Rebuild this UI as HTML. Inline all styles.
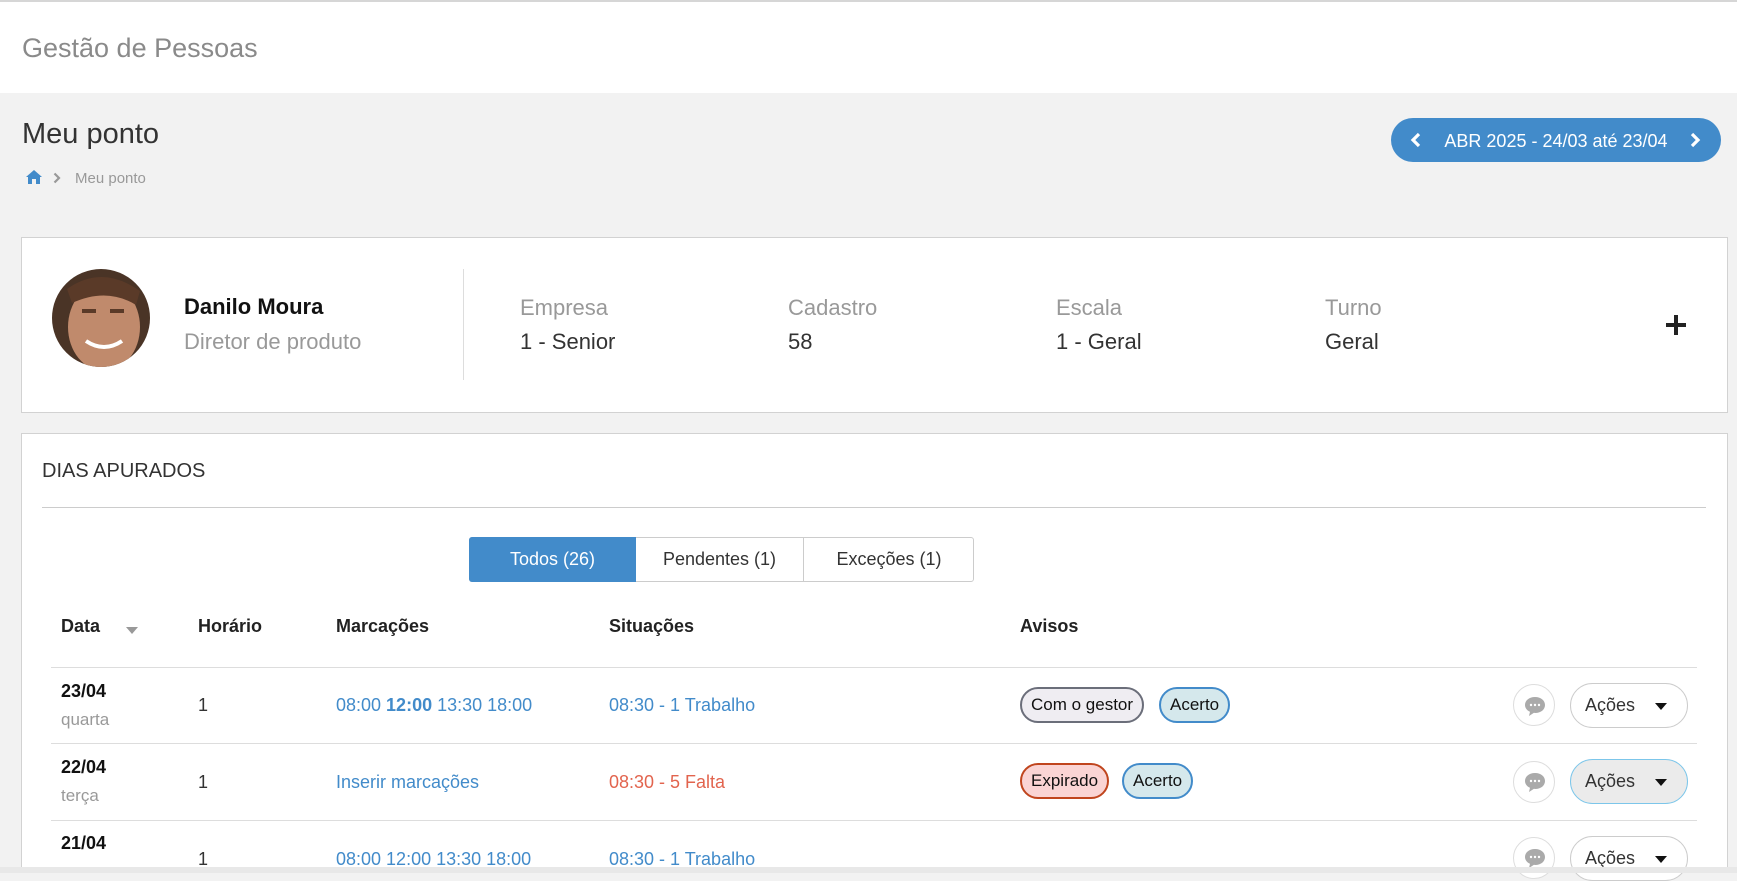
<!DOCTYPE html>
<html><head><meta charset="utf-8"><style>
*{box-sizing:border-box;margin:0;padding:0}
body{width:1737px;height:873px;overflow:hidden;background:#f2f2f2;font-family:"Liberation Sans","DejaVu Sans",sans-serif;position:relative;color:#333}
.a{position:absolute;white-space:nowrap}
.hdr{left:0;top:0;width:1737px;height:93px;background:#fff;border-top:2px solid #d6d6d6}
.card{background:#fff;border:1px solid #d2d2d2}
.lbl{font-size:22px;color:#999}
.val{font-size:22px;color:#333}
.th{font-size:18px;font-weight:bold;color:#222}
.blue{color:#428bca}
.badge{position:absolute;height:36px;border-radius:18px;border:2px solid;font-size:17px;line-height:32px;padding:0 9px;color:#111}
.cm{position:absolute;width:42px;height:42px;border-radius:50%;border:1px solid #ddd;background:#fff}
.ac{position:absolute;width:118px;height:45px;border-radius:23px;border:1px solid #ccc;background:#fff;font-size:18px;line-height:43px;padding-left:14px;color:#333}
.ac:after{content:"";position:absolute;right:20px;top:19px;border-left:6px solid transparent;border-right:6px solid transparent;border-top:7px solid #111}
.hl{position:absolute;left:51px;width:1646px;height:1px;background:#ddd}
</style></head><body>
<div class="a hdr"></div>
<div class="a" style="left:22px;top:33px;font-size:27px;color:#8a8a8a">Gestão de Pessoas</div>
<div class="a" style="left:22px;top:118px;font-size:29px;color:#333">Meu ponto</div>
<svg class="a" style="left:25px;top:169px" width="18" height="16" viewBox="0 0 18 16"><path d="M9 1 L1 8 L3 8 L3 15 L7 15 L7 10 L11 10 L11 15 L15 15 L15 8 L17 8 Z" fill="#428bca"/></svg>
<svg class="a" style="left:53px;top:172px" width="8" height="12" viewBox="0 0 8 12"><path d="M1.5 1.5 L6 6 L1.5 10.5" stroke="#999" stroke-width="2.2" fill="none"/></svg>
<div class="a" style="left:75px;top:170px;font-size:15px;color:#999">Meu ponto</div>
<div class="a" style="left:1391px;top:118px;width:330px;height:44px;border-radius:22px;background:#428bca;color:#fff;font-size:18px;line-height:46px;text-align:center">ABR 2025 - 24/03 até 23/04</div>
<svg class="a" style="left:1410px;top:132px" width="12" height="16" viewBox="0 0 12 16"><path d="M9 2 L3 8 L9 14" stroke="#fff" stroke-width="3.2" fill="none"/></svg>
<svg class="a" style="left:1689px;top:132px" width="12" height="16" viewBox="0 0 12 16"><path d="M3 2 L9 8 L3 14" stroke="#fff" stroke-width="3.2" fill="none"/></svg>

<div class="a card" style="left:21px;top:237px;width:1707px;height:176px"></div>
<svg class="a" style="left:52px;top:269px" width="98" height="98" viewBox="0 0 98 98"><defs><clipPath id="c"><circle cx="49" cy="49" r="49"/></clipPath></defs><g clip-path="url(#c)"><rect width="98" height="98" fill="#4a3426"/><ellipse cx="52" cy="58" rx="36" ry="44" fill="#c08a6c"/><path d="M15 20 Q50 -5 88 22 L84 36 Q55 18 20 34 Z" fill="#5a3a28"/><rect x="30" y="40" width="14" height="4" fill="#5a3a28"/><rect x="58" y="40" width="14" height="4" fill="#5a3a28"/><path d="M34 72 Q52 84 70 72" stroke="#fff" stroke-width="4" fill="none"/></g></svg>
<div class="a" style="left:184px;top:294px;font-size:22px;font-weight:bold;color:#111">Danilo Moura</div>
<div class="a" style="left:184px;top:329px;font-size:22px;color:#999">Diretor de produto</div>
<div class="a" style="left:463px;top:269px;width:1px;height:111px;background:#ddd"></div>
<div class="a lbl" style="left:520px;top:295px">Empresa</div><div class="a val" style="left:520px;top:329px">1 - Senior</div>
<div class="a lbl" style="left:788px;top:295px">Cadastro</div><div class="a val" style="left:788px;top:329px">58</div>
<div class="a lbl" style="left:1056px;top:295px">Escala</div><div class="a val" style="left:1056px;top:329px">1 - Geral</div>
<div class="a lbl" style="left:1325px;top:295px">Turno</div><div class="a val" style="left:1325px;top:329px">Geral</div>
<div class="a" style="left:1666px;top:323px;width:20px;height:4px;background:#222"></div>
<div class="a" style="left:1674px;top:315px;width:4px;height:20px;background:#222"></div>

<div class="a card" style="left:21px;top:433px;width:1707px;height:440px"></div>
<div class="a" style="left:42px;top:460px;font-size:20px;color:#333">DIAS APURADOS</div>
<div class="a" style="left:42px;top:507px;width:1664px;height:1px;background:#ccc"></div>
<div class="a" style="left:469px;top:537px;width:505px;height:45px;border:1px solid #ccc;border-radius:3px;background:#fff"></div>
<div class="a" style="left:469px;top:537px;width:167px;height:45px;background:#428bca;border-radius:3px 0 0 3px;color:#fff;font-size:18px;line-height:45px;text-align:center">Todos (26)</div>
<div class="a" style="left:636px;top:537px;width:168px;height:45px;border-right:1px solid #ccc;font-size:18px;line-height:45px;text-align:center;color:#333">Pendentes (1)</div>
<div class="a" style="left:804px;top:537px;width:170px;height:45px;font-size:18px;line-height:45px;text-align:center;color:#333">Exceções (1)</div>

<div class="a th" style="left:61px;top:616px">Data</div>
<div class="a" style="left:126px;top:627px;border-left:6px solid transparent;border-right:6px solid transparent;border-top:7px solid #999"></div>
<div class="a th" style="left:198px;top:616px">Horário</div>
<div class="a th" style="left:336px;top:616px">Marcações</div>
<div class="a th" style="left:609px;top:616px">Situações</div>
<div class="a th" style="left:1020px;top:616px">Avisos</div>
<div class="hl" style="top:667px"></div>
<div class="hl" style="top:743px"></div>
<div class="hl" style="top:820px"></div>

<div class="a" style="left:61px;top:681px;font-size:18px;font-weight:bold;color:#111">23/04</div>
<div class="a" style="left:61px;top:710px;font-size:17px;color:#999">quarta</div>
<div class="a" style="left:198px;top:695px;font-size:18px;color:#333">1</div>
<div class="a blue" style="left:336px;top:695px;font-size:18px">08:00 <b>12:00</b> 13:30 18:00</div>
<div class="a blue" style="left:609px;top:695px;font-size:18px">08:30 - 1 Trabalho</div>
<div class="badge" style="left:1020px;top:687px;background:#efedf2;border-color:#6b6e7a">Com o gestor</div>
<div class="badge" style="left:1159px;top:687px;background:#d5e8ec;border-color:#428bca">Acerto</div>
<div class="cm" style="left:1513px;top:684px"></div>
<div class="ac" style="left:1570px;top:683px">Ações</div>

<div class="a" style="left:61px;top:757px;font-size:18px;font-weight:bold;color:#111">22/04</div>
<div class="a" style="left:61px;top:786px;font-size:17px;color:#999">terça</div>
<div class="a" style="left:198px;top:772px;font-size:18px;color:#333">1</div>
<div class="a blue" style="left:336px;top:772px;font-size:18px">Inserir marcações</div>
<div class="a" style="left:609px;top:772px;font-size:18px;color:#e2644e">08:30 - 5 Falta</div>
<div class="badge" style="left:1020px;top:763px;background:#fad4d4;border-color:#c0451e">Expirado</div>
<div class="badge" style="left:1122px;top:763px;background:#d5e8ec;border-color:#428bca">Acerto</div>
<div class="cm" style="left:1513px;top:761px"></div>
<div class="ac" style="left:1570px;top:759px;background:#ebebeb;border-color:#7cc6ea">Ações</div>

<div class="a" style="left:61px;top:833px;font-size:18px;font-weight:bold;color:#111">21/04</div>
<div class="a" style="left:198px;top:849px;font-size:18px;color:#333">1</div>
<div class="a blue" style="left:336px;top:849px;font-size:18px">08:00 12:00 13:30 18:00</div>
<div class="a blue" style="left:609px;top:849px;font-size:18px">08:30 - 1 Trabalho</div>
<div class="cm" style="left:1513px;top:837px"></div>
<div class="ac" style="left:1570px;top:836px">Ações</div>

<svg class="a" style="left:1524px;top:695px" width="22" height="22" viewBox="0 0 22 22"><path d="M11 2 C5 2 1 5.5 1 10 C1 13 3 15.5 6 16.8 L5 21 L10 17.8 L11 18 C17 18 21 14.5 21 10 C21 5.5 17 2 11 2Z" fill="#aaa"/><circle cx="7" cy="10" r="1.2" fill="#fff"/><circle cx="11" cy="10" r="1.2" fill="#fff"/><circle cx="15" cy="10" r="1.2" fill="#fff"/></svg>
<svg class="a" style="left:1524px;top:771px" width="22" height="22" viewBox="0 0 22 22"><path d="M11 2 C5 2 1 5.5 1 10 C1 13 3 15.5 6 16.8 L5 21 L10 17.8 L11 18 C17 18 21 14.5 21 10 C21 5.5 17 2 11 2Z" fill="#aaa"/><circle cx="7" cy="10" r="1.2" fill="#fff"/><circle cx="11" cy="10" r="1.2" fill="#fff"/><circle cx="15" cy="10" r="1.2" fill="#fff"/></svg>
<svg class="a" style="left:1524px;top:847px" width="22" height="22" viewBox="0 0 22 22"><path d="M11 2 C5 2 1 5.5 1 10 C1 13 3 15.5 6 16.8 L5 21 L10 17.8 L11 18 C17 18 21 14.5 21 10 C21 5.5 17 2 11 2Z" fill="#aaa"/><circle cx="7" cy="10" r="1.2" fill="#fff"/><circle cx="11" cy="10" r="1.2" fill="#fff"/><circle cx="15" cy="10" r="1.2" fill="#fff"/></svg>
<div class="a" style="left:0;top:867px;width:1737px;height:6px;background:#e8e8e8"></div>
</body></html>
